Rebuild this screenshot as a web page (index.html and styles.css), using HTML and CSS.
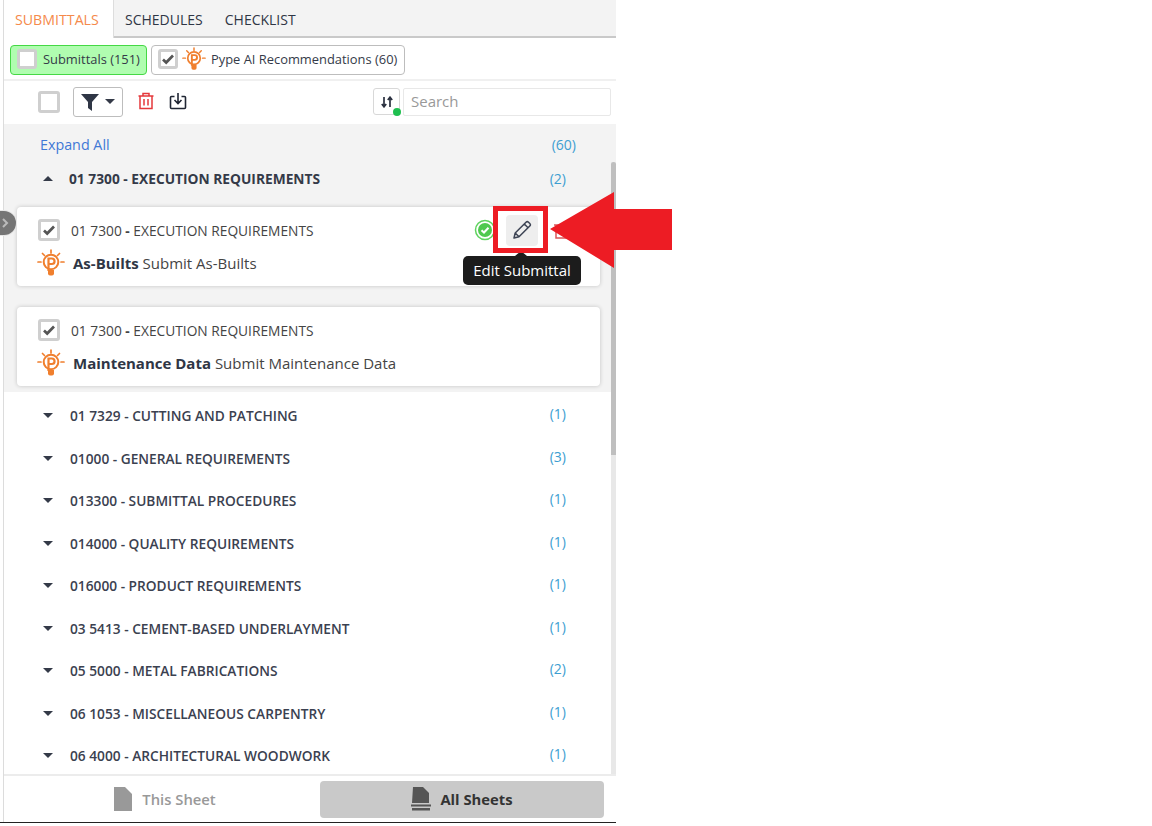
FILE: index.html
```html
<!DOCTYPE html>
<html lang="en">
<head>
<meta charset="utf-8">
<title>Submittals</title>
<link rel="stylesheet" href="styles.css">
</head>
<body>
<svg class="defs" width="0" height="0" aria-hidden="true">
  <symbol id="pype" viewBox="0 0 28 28">
    <g fill="none" stroke="#f07f2e" stroke-width="1.700" stroke-linecap="round">
      <path d="M14 1v3M5.500 4.500l2 2M22.500 4.500l-2 2M1 13h3M24 13h3"/>
      <circle cx="14" cy="13" r="7.300" stroke-width="2"/>
    </g>
    <path d="M11 21h6v3.500a2 2 0 0 1-2 2h-2a2 2 0 0 1-2-2z" fill="#f07f2e"/>
    <path d="M11.500 22V9.500h3.300a2.600 2.600 0 0 1 0 5.500h-3.300" fill="none" stroke="#f07f2e" stroke-width="2.200"/>
  </symbol>
  <symbol id="check" viewBox="0 0 14 14">
    <path d="M2 7.500l3.200 3L12 3.500" fill="none" stroke="#555" stroke-width="2.700"/>
  </symbol>
  <symbol id="sheet" viewBox="0 0 18 24">
    <path d="M0 0h11l7 7v17H0z" fill="currentColor"/>
  </symbol>
</svg>

<main class="panel">
  <nav class="tabs">
    <a class="tab tab-active">SUBMITTALS</a>
    <a class="tab">SCHEDULES</a>
    <a class="tab">CHECKLIST</a>
  </nav>

  <div class="chips">
    <div class="chip chip-on"><span class="box box-sm"></span><span>Submittals (151)</span></div>
    <div class="chip"><span class="box box-sm"><svg class="tick"><use href="#check"/></svg></span><svg class="pype-sm"><use href="#pype"/></svg><span>Pype AI Recommendations (60)</span></div>
  </div>

  <div class="toolbar">
    <span class="box box-lg"></span>
    <button class="filter">
      <svg width="18" height="18" viewBox="0 0 18 18"><path d="M0 1h18l-7 8v9l-4-3V9z" fill="#2f3645"/></svg>
      <span class="caret-down"></span>
    </button>
    <svg class="tool-icon" width="18" height="18" viewBox="0 0 18 18" fill="none" stroke="#e5383b" stroke-width="1.500"><path d="M1.500 4h15M6 4V1.500h6V4M3 4v12.500h12V4M7 7v6.500M11 7v6.500"/></svg>
    <svg class="tool-icon" width="18" height="18" viewBox="0 0 18 18" fill="none" stroke="#1f2533" stroke-width="1.600"><path d="M5.500 4.500H2.500a1 1 0 0 0-1 1v10a1 1 0 0 0 1 1h13a1 1 0 0 0 1-1v-10a1 1 0 0 0-1-1h-3M9 1v10M5.500 8L9 11.500 12.500 8"/></svg>
    <div class="toolbar-right">
      <button class="sort">
        <svg width="12" height="12" viewBox="0 0 12 12" fill="none" stroke="#2b3140" stroke-width="1.700"><path d="M3 1v9.500M.8 8L3 10.800 5.200 8M9 11V1.500M6.800 4L9 1.200 11.200 4"/></svg>
        <span class="dot"></span>
      </button>
      <div class="search">Search</div>
    </div>
  </div>

  <section class="list">
    <div class="open-group">
      <div class="expand-row"><a class="expand">Expand All</a><span class="count">(60)</span></div>
      <div class="group-head"><span class="caret-up"></span><span class="group-title">01 7300 - EXECUTION REQUIREMENTS</span><span class="count count-in">(2)</span></div>

      <article class="card card-first">
        <div class="card-top">
          <span class="box box-md"><svg class="tick"><use href="#check"/></svg></span>
          <span class="spec">01 7300 <b>-</b> EXECUTION REQUIREMENTS</span>
          <svg class="ok" width="22" height="22" viewBox="0 0 22 22"><circle cx="11" cy="11" r="9.500" fill="#fff" stroke="#5fd35f" stroke-width="1.500"/><circle cx="11" cy="11" r="7" fill="#4fc94f"/><path d="M7.500 11.200l2.500 2.300 4.500-4.800" fill="none" stroke="#fff" stroke-width="2"/></svg>
          <span class="edit-btn">
            <svg width="20" height="20" viewBox="0 0 20 20" fill="none" stroke="#3d4454" stroke-width="1.500" stroke-linejoin="round"><path d="M2 18l1.200-5L14 2.200a1.800 1.800 0 0 1 2.500 0l1.300 1.300a1.800 1.800 0 0 1 0 2.500L7 16.800zM12.300 4l3.700 3.700M3.200 13L7 16.800"/></svg>
          </span>
          <svg class="trash" width="16" height="18" viewBox="0 0 16 18" fill="none" stroke="#d9575a" stroke-width="1.500"><path d="M1 4h14M3 4v13h10V4"/></svg>
        </div>
        <div class="card-body"><svg class="pype-lg"><use href="#pype"/></svg><span><b>As-Builts</b> Submit As-Builts</span></div>
      </article>

      <article class="card">
        <div class="card-top">
          <span class="box box-md"><svg class="tick"><use href="#check"/></svg></span>
          <span class="spec">01 7300 <b>-</b> EXECUTION REQUIREMENTS</span>
        </div>
        <div class="card-body"><svg class="pype-lg"><use href="#pype"/></svg><span><b>Maintenance Data</b> Submit Maintenance Data</span></div>
      </article>
    </div>

    <div class="rows">
      <div class="row"><span class="caret-down"></span><span class="row-title">01 7329 - CUTTING AND PATCHING</span><span class="count">(1)</span></div>
      <div class="row"><span class="caret-down"></span><span class="row-title">01000 - GENERAL REQUIREMENTS</span><span class="count">(3)</span></div>
      <div class="row"><span class="caret-down"></span><span class="row-title">013300 - SUBMITTAL PROCEDURES</span><span class="count">(1)</span></div>
      <div class="row"><span class="caret-down"></span><span class="row-title">014000 - QUALITY REQUIREMENTS</span><span class="count">(1)</span></div>
      <div class="row"><span class="caret-down"></span><span class="row-title">016000 - PRODUCT REQUIREMENTS</span><span class="count">(1)</span></div>
      <div class="row"><span class="caret-down"></span><span class="row-title">03 5413 - CEMENT-BASED UNDERLAYMENT</span><span class="count">(1)</span></div>
      <div class="row"><span class="caret-down"></span><span class="row-title">05 5000 - METAL FABRICATIONS</span><span class="count">(2)</span></div>
      <div class="row"><span class="caret-down"></span><span class="row-title">06 1053 - MISCELLANEOUS CARPENTRY</span><span class="count">(1)</span></div>
      <div class="row"><span class="caret-down"></span><span class="row-title">06 4000 - ARCHITECTURAL WOODWORK</span><span class="count">(1)</span></div>
    </div>
  </section>

  <footer class="sheets">
    <div class="sheet-btn sheet-off">
      <svg class="sheet-icon" width="18" height="24"><use href="#sheet"/></svg>
      <span>This Sheet</span>
    </div>
    <div class="sheet-btn sheet-on">
      <svg width="20" height="24" viewBox="0 0 20 24"><path d="M2 0h10l6 6v10H1z" fill="#555"/><path d="M0 17.500h20v2H0zM1 21h18v2.500H1z" fill="#555"/></svg>
      <span>All Sheets</span>
    </div>
  </footer>

  <div class="scroll-track"><div class="scroll-thumb"></div></div>
</main>

<div class="side-tab"><svg width="7" height="10" viewBox="0 0 7 10" fill="none" stroke="#bbb" stroke-width="2"><path d="M1 1l4 4-4 4"/></svg></div>
<div class="tip">Edit Submittal</div>
<div class="mark"></div>
<svg class="arrow" width="122" height="76" viewBox="0 0 122 76"><path d="M0 37L64 0V17H122V58H64V76z" fill="#ed1c24"/></svg>
</body>
</html>
```
FILE: styles.css
```css
* { box-sizing: border-box; }

html, body {
  margin: 0;
  height: 826px;
  overflow: hidden;
  background: #fff;
}

body {
  font-family: "Open Sans", "Liberation Sans", sans-serif;
  color: #343a48;
  font-size: 14px;
  position: relative;
}

b { font-weight: 700; }

.defs { position: absolute; }

.panel {
  position: relative;
  width: 613px;
  height: 823px;
  margin-left: 3px;
  border-left: 1px solid #dcdcdc;
  border-bottom: 1px solid #222;
  display: flex;
  flex-direction: column;
}

.panel::after {
  content: "";
  position: absolute;
  left: -4px;
  bottom: -1px;
  width: 4px;
  height: 1px;
  background: #222;
}

/* Tabs */
.tabs {
  display: flex;
  height: 38px;
  flex: none;
  background: #f3f3f3;
  border-bottom: 2px solid #c9c9c9;
}

.tab {
  padding: 10px 11px 0;
  font-size: 14px;
  line-height: 19px;
  color: #2f3645;
}

.tab-active {
  width: 110px;
  height: 38px;
  background: #fff;
  color: #f58a4b;
  font-size: 14.200px;
  border-right: 1px solid #ddd;
}

/* Chips */
.chips {
  display: flex;
  gap: 4px;
  height: 43px;
  flex: none;
  padding: 7px 0 0 6px;
  border-bottom: 2px solid #f0f0f0;
}

.chip {
  display: flex;
  align-items: center;
  height: 30px;
  padding: 0 7px 2px 6px;
  gap: 6px;
  border: 1px solid #bdbdbd;
  border-radius: 4px;
  font-size: 12.900px;
  color: #343a48;
  white-space: nowrap;
}

.chip-on {
  width: 137px;
  padding-right: 0;
  background: #b0fdb0;
  border-color: #45d845;
  gap: 6px;
}

.box {
  display: flex;
  align-items: center;
  justify-content: center;
  flex: none;
  background: #fff;
  border: 3px solid #cfcfcf;
  border-radius: 3px;
}

.box-sm { width: 20px; height: 20px; }
.box-md { width: 22px; height: 22px; }
.box-lg { width: 22px; height: 22px; }

.tick { width: 14px; height: 14px; }
.pype-sm { width: 24px; height: 24px; margin: 0 -1px 0 -2px; }
.pype-lg { width: 28px; height: 28px; flex: none; }

/* Toolbar */
.toolbar {
  display: flex;
  align-items: center;
  height: 43px;
  flex: none;
  padding: 0 5px 2px 34px;
}

.filter {
  display: flex;
  align-items: center;
  gap: 6px;
  width: 50px;
  height: 30px;
  margin-left: 13px;
  padding: 0 0 0 7px;
  background: #fff;
  border: 1px solid #bdbdbd;
  border-radius: 3px;
}

.tool-icon { margin: 0 0 2px 14px; }

.toolbar-right {
  display: flex;
  align-items: center;
  gap: 3px;
  margin-left: auto;
}

.sort {
  position: relative;
  width: 27px;
  height: 27px;
  padding: 0;
  display: flex;
  align-items: center;
  justify-content: center;
  background: #fff;
  border: 1px solid #d8d8d8;
  border-radius: 3px;
}

.dot {
  position: absolute;
  right: -2px;
  bottom: -2px;
  width: 8px;
  height: 8px;
  border-radius: 50%;
  background: #1fbf4f;
}

.search {
  width: 208px;
  height: 28px;
  padding-left: 7px;
  border: 1px solid #e8e8e8;
  border-radius: 2px;
  font-size: 15px;
  line-height: 25px;
  color: #999;
}

/* List */
.list {
  flex: 1;
  min-height: 0;
  overflow: hidden;
}

.open-group {
  height: 268px;
  background: #f3f3f3;
  padding: 0 16px 0 13px;
}

.expand-row {
  display: flex;
  justify-content: space-between;
  height: 41px;
  padding: 11px 24px 0 23px;
  line-height: 19px;
}

.expand { color: #3f78d6; font-size: 14.300px; }

.group-head {
  display: flex;
  align-items: center;
  height: 27px;
  padding-left: 26px;
}

.group-title {
  margin-left: 16px;
  font-size: 13.750px;
  font-weight: 700;
  color: #343a48;
}

.count { color: #3d9ed1; font-size: 14px; }
.count-in { margin-left: auto; margin-right: 34px; }

.card {
  height: 79px;
  background: #fff;
  border-radius: 4px;
  box-shadow: 0 0 4px rgba(0, 0, 0, .2);
  padding: 12px 0 0 21px;
}

.card-first { margin-top: 15px; margin-bottom: 21px; }

.card-top {
  display: flex;
  align-items: center;
  height: 22px;
  gap: 11px;
}

.spec {
  font-size: 13.750px;
  color: #444;
}

.ok { margin-left: auto; }

.edit-btn {
  display: flex;
  flex: none;
  align-items: center;
  justify-content: center;
  width: 32px;
  height: 31px;
  margin-left: -1px;
  background: #eee;
  border-radius: 4px;
}

.trash { flex: none; margin: 0 31px 0 4px; }

.card-body {
  display: flex;
  align-items: center;
  gap: 8px;
  margin: 8px 0 0 -1px;
  font-size: 15px;
  color: #444;
}

.card-body b { color: #2f3645; }

.rows { padding: 2.500px 0 0 39px; }

.row {
  display: flex;
  align-items: center;
  height: 42.500px;
}

.row-title {
  margin-left: 17px;
  font-size: 13.730px;
  font-weight: 600;
  color: #3b4150;
}

.row .count { margin-left: auto; margin-right: 50px; position: relative; top: -2px; }

.caret-down, .caret-up {
  display: inline-block;
  flex: none;
  width: 0;
  height: 0;
  border-left: 5px solid transparent;
  border-right: 5px solid transparent;
}

.caret-down { border-top: 5px solid #343a48; }
.caret-up { border-bottom: 5px solid #343a48; }

/* Footer */
.sheets {
  display: flex;
  gap: 0;
  height: 48px;
  flex: none;
  padding: 5px 12px 4px 0;
  border-top: 2px solid #ececec;
}

.sheet-btn {
  flex: 1;
  display: flex;
  align-items: center;
  justify-content: center;
  gap: 10px;
  padding-bottom: 2px;
  font-size: 14.800px;
  font-weight: 600;
  color: #999;
  border-radius: 4px;
}

.sheet-off { padding-left: 10px; }

.sheet-icon { color: #999; }

.sheet-on {
  flex: none;
  width: 284px;
  margin-left: 4px;
  gap: 9px;
  background: #c9c9c9;
  color: #333;
  font-weight: 700;
}

/* Overlays */
.scroll-track {
  position: absolute;
  top: 162px;
  right: 0;
  width: 5px;
  height: 612px;
  background: #e8e8e8;
}

.scroll-thumb {
  height: 293px;
  border-radius: 3px 3px 0 0;
  background: #bfbfbf;
}

.side-tab {
  position: absolute;
  left: 0;
  top: 211px;
  width: 16px;
  height: 24px;
  padding-left: 2px;
  display: flex;
  align-items: center;
  background: #757575;
  border-radius: 0 12px 12px 0;
  box-shadow: 0 0 0 1px #e6e6e6;
}

.tip {
  position: absolute;
  left: 463px;
  top: 256px;
  width: 118px;
  height: 29px;
  background: #1c1c1c;
  border-radius: 5px;
  color: #fff;
  font-size: 15px;
  line-height: 28px;
  text-align: center;
}

.tip::before {
  content: "";
  position: absolute;
  left: 52px;
  top: -5px;
  border-left: 6px solid transparent;
  border-right: 6px solid transparent;
  border-bottom: 5px solid #1c1c1c;
}

.mark {
  position: absolute;
  left: 493px;
  top: 206px;
  width: 55px;
  height: 47px;
  border: 5px solid #ed1c24;
}

.arrow {
  position: absolute;
  left: 550px;
  top: 192px;
}
```
